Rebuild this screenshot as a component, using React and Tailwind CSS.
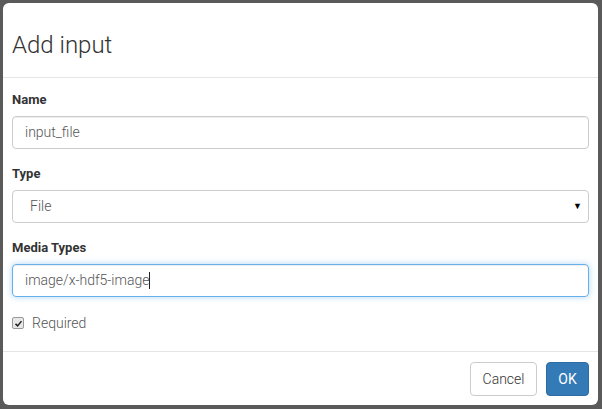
import React from "react";

const font = { fontFamily: "Roboto, 'Liberation Sans', sans-serif" };

function Field({ label, children }) {
  return (
    <div className="mb-[16px]">
      <label className="block h-[18px] leading-[18px] mb-[7px] text-[13px] font-bold text-[#333]">{label}</label>
      {children}
    </div>
  );
}

export default function App() {
  return (
    <div className="w-[602px] h-[409px] bg-[#5a5a5a] pt-[3px] pl-[3px] pr-[4px] pb-[4px]" style={font}>
      <div className="h-full bg-white rounded-[6px] flex flex-col overflow-hidden">
        {/* header */}
        <div className="h-[75px] shrink-0 border-b border-[#e5e5e5] flex items-center px-[9px] pt-[9px]">
          <h4 className="text-[24px] font-light text-[#333] leading-none">Add input</h4>
        </div>

        {/* body */}
        <div className="flex-1 px-[9px] pt-[13px]">
          <Field label="Name">
            <div className="h-[33px] border border-[#ccc] rounded-[4px] px-[12px] flex items-center text-[14px] font-light text-[#555] shadow-[inset_0_1px_1px_rgba(0,0,0,0.075)]">
              input_file
            </div>
          </Field>
          <Field label="Type">
            <div className="h-[33px] border border-[#ccc] rounded-[4px] pl-[17px] pr-[6px] flex items-center justify-between text-[14px] font-light text-[#555]">
              <span>File</span>
              <span className="text-[9px] text-black">▼</span>
            </div>
          </Field>
          <Field label="Media Types">
            <div className="h-[33px] border border-[#66afe9] rounded-[4px] px-[12px] flex items-center text-[14px] font-light text-[#555] shadow-[inset_0_1px_1px_rgba(0,0,0,0.075),0_0_6px_rgba(102,175,233,0.5)]">
              image/x-hdf5-image
              <span className="inline-block w-px h-[17px] bg-[#222]" />
            </div>
          </Field>
          <div className="flex items-center h-[20px] gap-[8px]">
            <span className="w-[12px] h-[12px] rounded-[2px] border border-[#999] bg-[#e8e8e8] flex items-center justify-center">
              <svg viewBox="0 0 12 12" className="w-[9px] h-[9px]">
                <path d="M2 6.5 L4.8 9.2 L10 2.8" fill="none" stroke="#222" strokeWidth="2" />
              </svg>
            </span>
            <span className="text-[14px] font-light text-[#555]">Required</span>
          </div>
        </div>

        {/* footer */}
        <div className="h-[54px] shrink-0 border-t border-[#e5e5e5] flex justify-end items-start pt-[10px] pr-[9px] gap-[9px]">
          <button className="h-[34px] w-[67px] border border-[#ccc] rounded-[4px] bg-white text-[14px] font-light text-[#333]">Cancel</button>
          <button className="h-[34px] w-[43px] border border-[#2e6da4] rounded-[4px] bg-[#337ab7] text-[14px] text-white">OK</button>
        </div>
      </div>
    </div>
  );
}
